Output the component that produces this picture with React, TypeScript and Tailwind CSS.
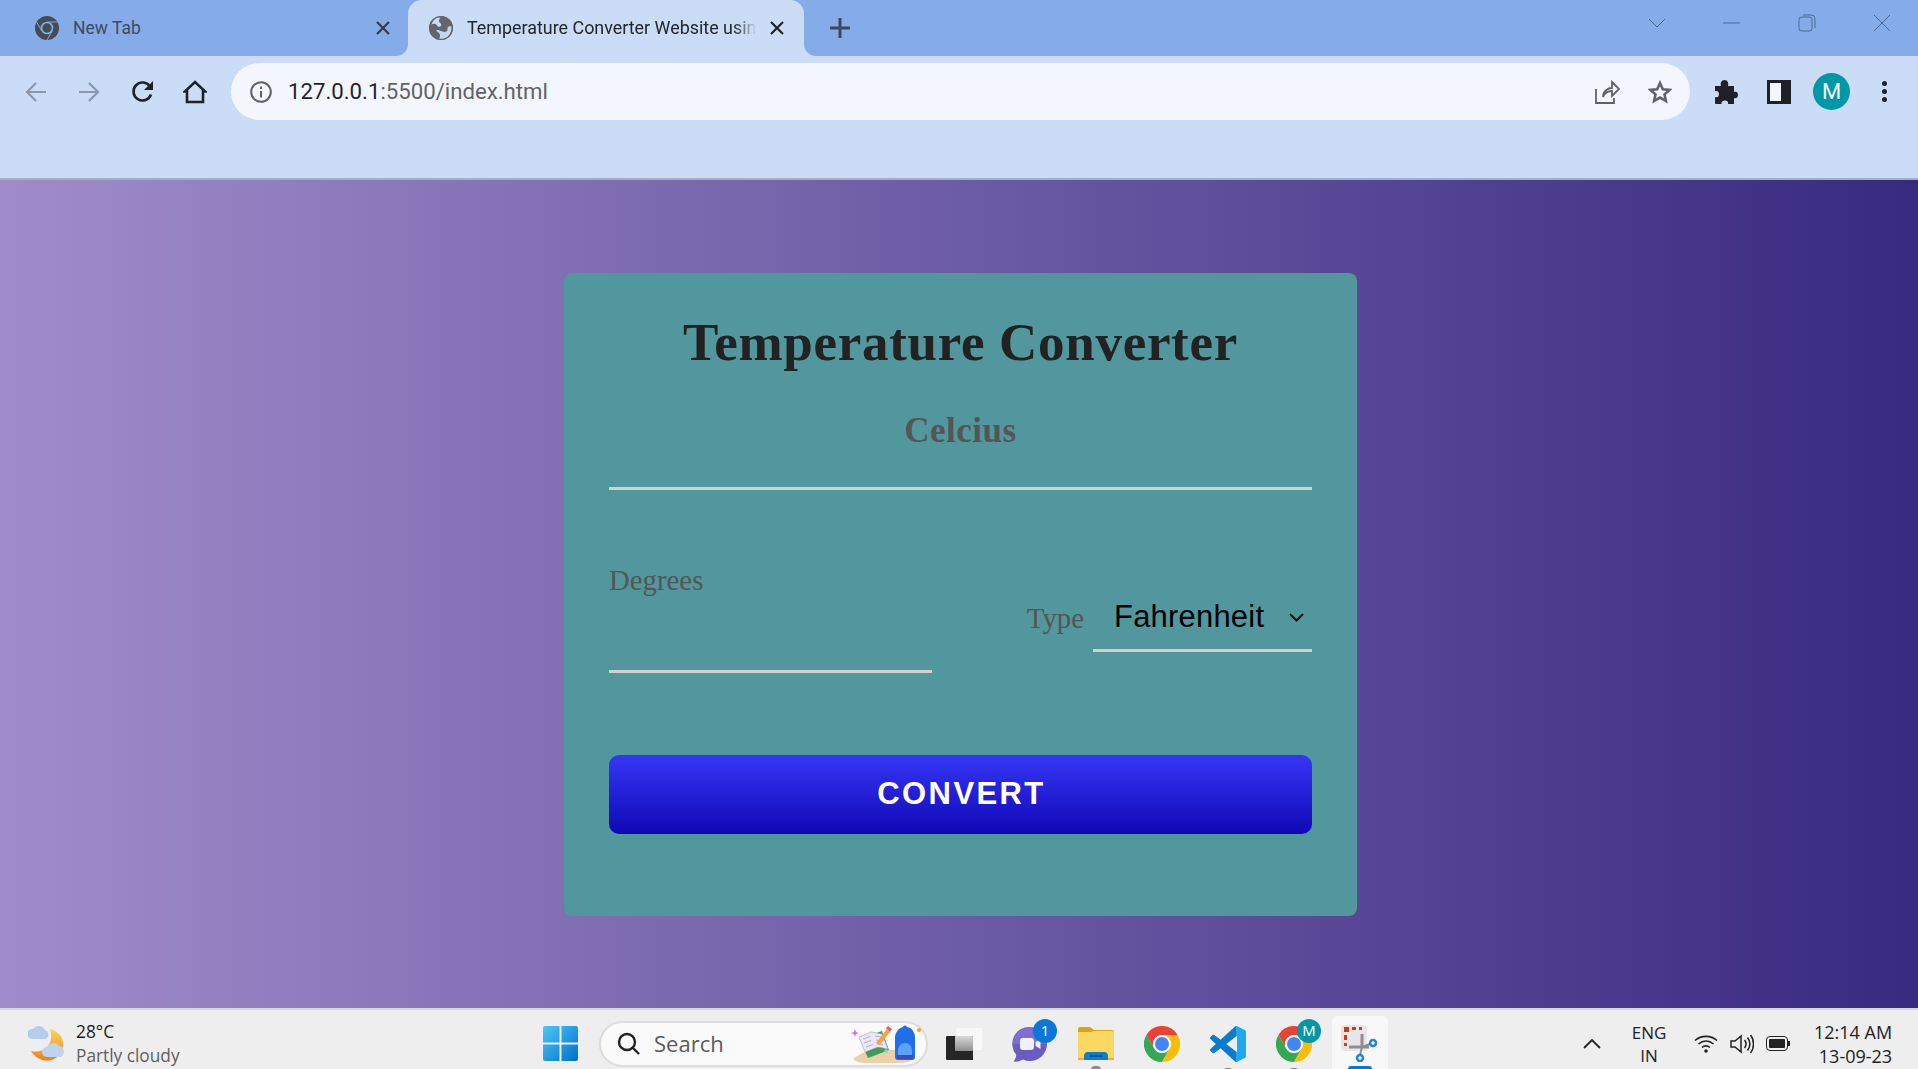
import React from "react";

const ChromeLogo = ({ size = 36 }: { size?: number }) => (
  <svg width={size} height={size} viewBox="0 0 36 36">
    <path d="M18 9H33.6A18 18 0 0 0 2.4 9L10.2 22.5A9 9 0 0 1 18 9Z" fill="#ea4335" />
    <path d="M10.2 22.5L2.4 9A18 18 0 0 0 18 36L25.8 22.5A9 9 0 0 1 10.2 22.5Z" fill="#34a853" />
    <path d="M25.8 22.5L18 36A18 18 0 0 0 33.6 9H18A9 9 0 0 1 25.8 22.5Z" fill="#fbbc05" />
    <circle cx="18" cy="18" r="9" fill="#fff" />
    <circle cx="18" cy="18" r="7" fill="#4285f4" />
  </svg>
);

const ChromeMono = () => (
  <svg width="24" height="24" viewBox="0 0 36 36">
    <circle cx="18" cy="18" r="18" fill="#444b55" />
    <path d="M18 9H34M10.200 22.500L2.400 9M25.800 22.500L18 36" stroke="#85ace9" strokeWidth="1.400" />
    <circle cx="18" cy="18" r="9.500" fill="#85ace9" />
    <circle cx="18" cy="18" r="7" fill="#444b55" />
  </svg>
);

const Globe = () => (
  <svg width="24" height="24" viewBox="0 0 24 24">
    <circle cx="12" cy="12" r="12" fill="#63676d" />
    <path d="M2.500 8.500C5 7 7 7.500 8 9.500c1 1.600 3.200 1.600 4 .3.800-1.400-.4-2.600-1.600-3.600C9.400 5.200 10 3 11.500 1.500L9 1C6 2 3.700 5 2.500 8.500Z" fill="#cbdcf6" />
    <path d="M22.500 10.500c-2.500-.5-4.500.5-4 2.500.5 2.500-2.500 3.500-5 2.500-2.500-1-5-1.800-6.300-1.300 1 1.800 3.500 2.500 3.800 4.500.2 1.400-.3 3-1 4 2.500.8 6.500.3 9-2.200 2.500-2.500 3.800-6 3.500-10Z" fill="#cbdcf6" opacity="0.95" />
    <circle cx="12" cy="12" r="11.400" fill="none" stroke="#63676d" strokeWidth="1.200" />
  </svg>
);

const Close = ({ color }: { color: string }) => (
  <svg width="14" height="14" viewBox="0 0 14 14" stroke={color} strokeWidth="2.200">
    <path d="M1 1L13 13M13 1L1 13" />
  </svg>
);

const Wi = ({ children }: { children: React.ReactNode }) => (
  <svg width="18" height="18" viewBox="0 0 18 18" fill="none" stroke="#4d6992" strokeWidth="1">
    {children}
  </svg>
);

const WindowsLogo = () => (
  <svg width="35" height="35" viewBox="0 0 35 35">
    <defs>
      <linearGradient id="wlg" x1="0" y1="0" x2="1" y2="1">
        <stop offset="0" stopColor="#4cc8fb" />
        <stop offset="1" stopColor="#0070c8" />
      </linearGradient>
    </defs>
    <path d="M0 2a2 2 0 0 1 2-2h14.500v16.500H0ZM18.500 0H33a2 2 0 0 1 2 2v14.500H18.500ZM0 18.500h16.500V35H2a2 2 0 0 1-2-2ZM18.500 18.500H35V33a2 2 0 0 1-2 2H18.500Z" fill="url(#wlg)" />
  </svg>
);

const SearchArt = () => (
  <svg width="72" height="40" viewBox="0 0 72 40">
    <path d="M3 35c5-4 14-9 21-9h26c6 0 11 3 15 8-4 3-9 5-16 5H17C11 39 6 38 3 35Z" fill="#ecd0a6" />
    <path d="M10 15l22-8 7 19-21 8Z" fill="#3f9b58" />
    <path d="M9 13l12-5 11 2 6 15-10-2-13 5Z" fill="#ebe6f3" stroke="#a99fc4" strokeWidth="0.6" />
    <path d="M13 15l7-2.500M14 19l7-2.500M16 23l7-2.500M25 12l6 1M26 16l6 1M27 20l6 1" stroke="#a69cc0" strokeWidth="0.8" />
    <path d="M26 19L37 5l3 3-10 13Z" fill="#f6a53e" />
    <path d="M36 4l2-2 4 3-2 3Z" fill="#ee5f4e" />
    <path d="M1 9l3-1 1-3 1 3 3 1-3 1-1 3-1-3Z" fill="#d66ee8" />
    <circle cx="36" cy="27" r="1.800" fill="#72d4ea" />
    <path d="M45 14c0-6 4-10 8-11 1-2 3-2 4 0 5 1 8 5 8 11v19a3 3 0 0 1-3 3H48a3 3 0 0 1-3-3Z" fill="#1f6fe8" />
    <path d="M48 27c0-5 3-8 7-8s7 3 7 8v5H48Z" fill="#5aa3f7" />
    <path d="M47 31h16v4H47Z" fill="#3b4dc4" />
    <circle cx="69" cy="6" r="2" fill="#f8a51c" />
  </svg>
);

const TaskView = () => (
  <svg width="37" height="33" viewBox="0 0 37 33">
    <defs>
      <linearGradient id="tvg" x1="0" y1="0" x2="0" y2="1">
        <stop offset="0" stopColor="#d8d8d8" />
        <stop offset="1" stopColor="#8f8f8f" />
      </linearGradient>
    </defs>
    <rect x="9" y="0" width="28" height="24" rx="1" fill="#f8f8f8" stroke="#e4e4e4" />
    <path d="M1 9h26v24H1a1 1 0 0 1-1-1V10a1 1 0 0 1 1-1Z" fill="#262626" />
    <rect x="9" y="9" width="18" height="15" rx="1" fill="url(#tvg)" />
  </svg>
);

const Chat = () => (
  <svg width="36" height="36" viewBox="0 0 36 36">
    <path d="M18 1a17 17 0 1 1-7 32.500c-3 1.500-6 2.500-9.500 2 1.500-2 2.700-4 2.800-6.500A17 17 0 0 1 18 1Z" fill="#6a5cc0" />
    <path d="M18 1a17 17 0 0 1 17 17H1A17 17 0 0 1 18 1Z" fill="#8a7bd8" opacity="0.6" />
    <rect x="8" y="12" width="14" height="12" rx="3" fill="#f2f0fb" />
    <path d="M23.500 16l5-3v10l-5-3Z" fill="#f2f0fb" />
  </svg>
);

const Folder = () => (
  <svg width="36" height="33" viewBox="0 0 36 33">
    <path d="M0 2a2 2 0 0 1 2-2h10l4 3h18a2 2 0 0 1 2 2v3H0Z" fill="#dfa30c" />
    <path d="M0 5h13l3-1h18a2 2 0 0 1 2 2v27H0Z" fill="#fbd860" />
    <path d="M6 33v-4a4 4 0 0 1 4-4h16a4 4 0 0 1 4 4v4Z" fill="#0a7fd0" />
    <path d="M11 29h14" stroke="#07508c" strokeWidth="1.500" />
    <path d="M0 31h6v2H0ZM30 31h6v2h-6Z" fill="#e9b22a" />
  </svg>
);

const VSCode = () => (
  <svg width="36" height="36" viewBox="0 0 24 24">
    <defs>
      <linearGradient id="vsg" x1="0" y1="0" x2="1" y2="0">
        <stop offset="0.72" stopColor="#0a7ccb" />
        <stop offset="0.72" stopColor="#1fa7f2" />
      </linearGradient>
    </defs>
    <path
      d="M23.150 2.587L18.210.21a1.494 1.494 0 0 0-1.705.29l-9.460 8.630-4.120-3.128a.999.999 0 0 0-1.276.057L.327 7.261A1 1 0 0 0 .326 8.740L3.899 12 .326 15.260a1 1 0 0 0 .001 1.479L1.650 17.940a.999.999 0 0 0 1.276.057l4.120-3.128 9.460 8.630a1.492 1.492 0 0 0 1.704.290l4.942-2.377A1.500 1.500 0 0 0 24 20.060V3.939a1.500 1.500 0 0 0-.850-1.352zm-5.146 14.861L10.826 12l7.178-5.448v10.896z"
      fill="url(#vsg)"
    />
  </svg>
);

const Snip = () => (
  <svg width="38" height="38" viewBox="0 0 38 38" fill="none">
    <rect x="0" y="1" width="26" height="26" rx="4" fill="#e6e6ea" />
    <path d="M3 3h5v5H3ZM11 3h4v3h-4ZM3 11h3v5H3ZM3 19h3v3H3ZM18 3h3v3h-3Z" fill="#cf3a10" />
    <path d="M21 10v13M8 23h20" stroke="#8d8d92" strokeWidth="3" />
    <path d="M21 23l8 -3M21 23l-2 8" stroke="#8d8d92" strokeWidth="2" />
    <circle cx="32" cy="19" r="3" stroke="#1a86e0" strokeWidth="2.500" fill="#fff" />
    <circle cx="19" cy="34" r="3" stroke="#1a86e0" strokeWidth="2.500" fill="#fff" />
  </svg>
);

const Weather = () => (
  <svg width="38" height="38" viewBox="0 0 38 38">
    <defs>
      <linearGradient id="mg" x1="0" y1="0" x2="0" y2="1">
        <stop offset="0" stopColor="#fcd45c" />
        <stop offset="1" stopColor="#f0801c" />
      </linearGradient>
    </defs>
    <path d="M22 4c10 2 16 12 12 22-3 8-14 12-22 8-5-2-8-6-9-8 12 3 24-6 19-22Z" fill="url(#mg)" />
    <path d="M4 14a5 5 0 0 1 1-10 7 7 0 0 1 12 1 5 5 0 0 1 1 9Z" fill="#b5cdea" />
    <path d="M19 32a5 5 0 0 1 0-10 7 7 0 0 1 12-1 6 6 0 0 1 2 11Z" fill="#bdd4ee" />
  </svg>
);

const Badge = ({ children, bg }: { children: React.ReactNode; bg: string }) => (
  <div
    className={`absolute -top-[7px] -right-[9px] flex h-[24px] w-[24px] items-center justify-center rounded-full text-[15px] text-white ${bg}`}
  >
    {children}
  </div>
);

const Dot = () => <div className="absolute -bottom-[10px] left-1/2 h-[4px] w-[10px] -translate-x-1/2 rounded-t-full bg-[#8b8b8b]" />;

export default function App() {
  return (
    <div className="flex h-[1069px] w-[1918px] flex-col overflow-hidden font-['Roboto',sans-serif]">
      {/* tab strip */}
      <div className="flex h-14 shrink-0 items-center bg-[#85ace9]">
        <div className="flex h-full w-[396px] items-center pl-[35px] pr-[6px]">
          <ChromeMono />
          <span className="ml-[14px] pt-[1px] text-[17.500px] text-[#3f4a5c]">New Tab</span>
          <div className="ml-auto">
            <Close color="#343c48" />
          </div>
        </div>
        <div className="relative ml-[12px] flex h-full w-[396px] items-center rounded-t-[14px] bg-[#cbdcf6] pl-[21px]">
          <div className="absolute -left-3 bottom-0 h-3 w-3 bg-[radial-gradient(circle_at_0_0,#85ace9_11.500px,#cbdcf6_12.500px)]" />
          <div className="absolute -right-3 bottom-0 h-3 w-3 bg-[radial-gradient(circle_at_100%_0,#85ace9_11.500px,#cbdcf6_12.500px)]" />
          <Globe />
          <span className="ml-[14px] w-[290px] whitespace-nowrap pt-[1px] text-[17.900px] text-[#23262b] [mask-image:linear-gradient(to_right,black_92%,transparent_100%)]">
            Temperature Converter Website usin
          </span>
          <div className="ml-[13px]">
            <Close color="#1f2328" />
          </div>
        </div>
        <div className="ml-[26px]">
          <svg width="20" height="20" viewBox="0 0 20 20" stroke="#3c4a60" strokeWidth="3">
            <path d="M10 0V20M0 10H20" />
          </svg>
        </div>
        <div className="mb-[10px] ml-auto flex items-center gap-[57px] pr-[27px]">
          <Wi>
            <path d="M1 5l8 8 8-8" />
          </Wi>
          <Wi>
            <path d="M0 9H17" />
          </Wi>
          <Wi>
            <rect x="1" y="3" width="13" height="14" rx="2.500" />
            <path d="M5 1h8a4 4 0 0 1 4 4v9" />
          </Wi>
          <Wi>
            <path d="M1 1l16 16M17 1L1 17" />
          </Wi>
        </div>
      </div>

      {/* toolbar */}
      <div className="flex h-[124px] shrink-0 items-start border-b-2 border-[#a4aec2] bg-[#cbdcf6] pt-[7px]">
        <div className="flex h-[57px] w-[231px] items-center pl-[25px]">
          <svg width="22" height="22" viewBox="0 0 22 22" fill="none" stroke="#8c97ab" strokeWidth="2.200">
            <path d="M21 11H2M11 2l-9 9 9 9" />
          </svg>
          <svg className="ml-[31px]" width="22" height="22" viewBox="0 0 22 22" fill="none" stroke="#8c97ab" strokeWidth="2.200">
            <path d="M1 11H20M11 2l9 9-9 9" />
          </svg>
          <svg className="ml-[31px]" width="24" height="24" viewBox="0 0 24 24" fill="none">
            <path d="M20 14.500A9 9 0 1 1 19 6.500" stroke="#1f2328" strokeWidth="2.600" />
            <path d="M22 1v9h-9Z" fill="#1f2328" />
          </svg>
          <svg className="ml-[28px]" width="24" height="24" viewBox="0 0 24 24" fill="none" stroke="#1f2328" strokeWidth="2.600">
            <path d="M4 22h16V11.500h2.200L12 2 1.800 11.500H4Z" />
          </svg>
        </div>
        <div className="flex h-[57px] w-[1459px] items-center rounded-full bg-[#f3f7fd] pl-[19px] pr-[18px]">
          <svg width="22" height="22" viewBox="0 0 22 22" fill="none" stroke="#5f6368" strokeWidth="2">
            <circle cx="11" cy="11" r="9.800" />
            <path d="M11 10v6.500M11 5.500v2.500" />
          </svg>
          <span className="ml-[16px] text-[22.200px] text-[#5f6368]">
            <span className="text-[#1f2328]">127.0.0.1</span>:5500/index.html
          </span>
          <div className="ml-auto flex items-center gap-[28px]">
            <svg width="25" height="24" viewBox="0 0 25 24" fill="none" stroke="#5f6368" strokeWidth="1.800">
              <path d="M1 9v14h18v-5M8 17c0-6 5-9 9-9V2l7 7-7 7v-5c-4 0-7 1-9 6Z" />
            </svg>
            <svg width="24" height="24" viewBox="0 0 24 24" fill="none" stroke="#5f6368" strokeWidth="2.600">
              <path d="M12 3l2.800 6.200 6.700.7-5 4.500 1.400 6.600L12 17.600 6.100 21l1.400-6.600-5-4.500 6.700-.7Z" />
            </svg>
          </div>
        </div>
        <div className="flex h-[57px] flex-1 items-center pl-[24px]">
          <svg width="24" height="24" viewBox="0 0 24 24" fill="#1f2126">
            <path d="M1 6h6c-1-3 .5-6 3.500-6S15 3 14 6h6v6c3-1 4 1 4 3s-1.500 4-4 3v6h-6c.5-2.500-1-3.500-3-3.500S7 22 7.500 24H2a1 1 0 0 1-1-1v-6c2.500 1 4-.5 4-3S3 10.500 1 11.500Z" />
          </svg>
          <div className="ml-[29px] flex h-[24px] w-[24px] items-center justify-end border-[3px] border-[#1f2126] bg-[#1f2126]">
            <div className="mr-[7px] h-full w-[11px] bg-[#f3f7fd]" />
          </div>
          <div className="ml-[22px] flex h-[37px] w-[37px] items-center justify-center rounded-full bg-[#0097a7] text-[22px] text-white">
            M
          </div>
          <div className="ml-[32px] flex flex-col gap-[3px]">
            <div className="h-[5px] w-[5px] rounded-full bg-[#1f2328]" />
            <div className="h-[5px] w-[5px] rounded-full bg-[#1f2328]" />
            <div className="h-[5px] w-[5px] rounded-full bg-[#1f2328]" />
          </div>
        </div>
      </div>

      {/* page */}
      <div className="flex flex-1 items-center justify-center bg-[linear-gradient(to_right,#a08cca,#382a80)]">
        <div className="ml-[3px] w-[793px] rounded-[8px] bg-[#52979d] px-[45px] pb-[82px] pt-[39px] font-['Liberation_Serif',serif]">
          <h1 className="h-[60px] text-center text-[53px] font-bold leading-[60px] tracking-[0.7px] text-[#222]">
            Temperature Converter
          </h1>
          <label className="mt-[39px] block h-[40px] text-center text-[35px] font-bold leading-[40px] tracking-[0.5px] text-[#555]">
            Celcius
          </label>
          <input className="block h-[39px] w-full border-b-[3px] border-[#d0d0d0] bg-transparent outline-none" />
          <div className="mt-[70px] flex items-start justify-between">
            <div className="w-[323px]">
              <label className="block h-[40px] text-[28.800px] leading-[40px] text-[#555]">Degrees</label>
              <input className="block h-[73px] w-full border-b-[3px] border-[#d0d0d0] bg-transparent outline-none" />
            </div>
            <div className="mt-[38px] flex items-start">
              <label className="mr-[9px] h-[40px] text-[28.800px] leading-[40px] text-[#555]">Type</label>
              <div className="flex h-[54px] w-[219px] items-start justify-between border-b-[3px] border-[#d0d0d0] pl-[21px] pr-[8px] pt-[1px] font-['Liberation_Sans',sans-serif]">
                <span className="text-[31px] leading-[36px] tracking-[0.2px] text-black">Fahrenheit</span>
                <svg className="mt-[14px]" width="15" height="9" viewBox="0 0 15 9" fill="none" stroke="#111" strokeWidth="2">
                  <path d="M1 1l6.500 6.500L14 1" />
                </svg>
              </div>
            </div>
          </div>
          <button className="mt-[82px] flex h-[79px] w-full items-center justify-center rounded-[10px] bg-[linear-gradient(to_bottom,#3636f5,#0f08b5)] pl-[2px] font-['Liberation_Sans',sans-serif] text-[31px] font-bold tracking-[2.400px] text-white">
            CONVERT
          </button>
        </div>
      </div>

      {/* taskbar */}
      <div className="flex h-[61px] shrink-0 items-center border-t-2 border-[#d6d6d6] bg-[#eeeeee] pl-[28px] pt-[8px] font-['Open_Sans',sans-serif]">
        <Weather />
        <div className="ml-[10px] flex w-[100px] flex-col leading-[24px]">
          <span className="text-[17.300px] text-[#1c1c1c]">28°C</span>
          <span className="whitespace-nowrap text-[17.300px] text-[#5f5f5f]">Partly cloudy</span>
        </div>
        <div className="ml-[367px]">
          <WindowsLogo />
        </div>
        <div className="ml-[21px] flex h-[46px] w-[329px] items-center rounded-full border-2 border-[#dcdcdc] bg-[#fafafa] pl-[16px]">
          <svg width="24" height="24" viewBox="0 0 24 24" fill="none" stroke="#222" strokeWidth="2.400">
            <circle cx="10" cy="10" r="8" />
            <path d="M16 16l6 6" />
          </svg>
          <span className="ml-[13px] text-[22px] text-[#5a5a5a]">Search</span>
          <div className="ml-auto mr-[4px]">
            <SearchArt />
          </div>
        </div>
        <div className="ml-[18px]">
          <TaskView />
        </div>
        <div className="relative ml-[29px]">
          <Chat />
          <Badge bg="bg-[#0a78d4]">1</Badge>
        </div>
        <div className="relative ml-[30px]">
          <Folder />
          <Dot />
        </div>
        <div className="ml-[30px]">
          <ChromeLogo />
        </div>
        <div className="relative ml-[30px]">
          <VSCode />
          <Dot />
        </div>
        <div className="relative ml-[30px]">
          <ChromeLogo />
          <Badge bg="bg-[#0097a7]">M</Badge>
          <Dot />
        </div>
        <div className="relative ml-[20px] flex h-[53px] w-[56px] self-end items-center justify-center rounded-t-[6px] bg-[#f8f8f8]">
          <Snip />
          <div className="absolute bottom-0 left-[16px] h-[3px] w-[24px] rounded-t-full bg-[#0a78d4]" />
        </div>
        <div className="ml-[195px]">
          <svg width="18" height="10" viewBox="0 0 18 10" fill="none" stroke="#222" strokeWidth="1.800">
            <path d="M1 9l8-8 8 8" />
          </svg>
        </div>
        <div className="ml-[29px] flex w-[38px] flex-col items-center text-[17px] leading-[23px] text-[#222]">
          <span>ENG</span>
          <span>IN</span>
        </div>
        <div className="ml-[26px] flex items-center gap-[12px]">
          <svg width="24" height="19" viewBox="0 0 24 19" fill="none" stroke="#222" strokeWidth="1.600">
            <path d="M1 6.500C7 1 17 1 23 6.500M4.500 10c4.500-4 10.500-4 15 0M8 13.500c2.500-2 5.500-2 8 0" />
            <circle cx="12" cy="17" r="1.800" fill="#222" stroke="none" />
          </svg>
          <svg width="24" height="22" viewBox="0 0 24 22" fill="none" stroke="#222" strokeWidth="1.500">
            <path d="M1 8h4l6-5v16l-6-5H1ZM14.500 7c2 2.500 2 5.500 0 8M17.500 4.500c3 4 3 9 0 13M20.500 2c4 5 4 13 0 18" />
          </svg>
          <div className="flex items-center">
            <div className="flex h-[15px] w-[22px] items-center rounded-[4px] border-[1.500px] border-[#222] p-[2px]">
              <div className="h-full w-full rounded-[1px] bg-[#222]" />
            </div>
            <div className="h-[5px] w-[2px] bg-[#222]" />
          </div>
        </div>
        <div className="ml-[24px] flex flex-col items-end text-[18px] leading-[24px] text-[#222]">
          <span>12:14 AM</span>
          <span>13-09-23</span>
        </div>
      </div>
    </div>
  );
}
